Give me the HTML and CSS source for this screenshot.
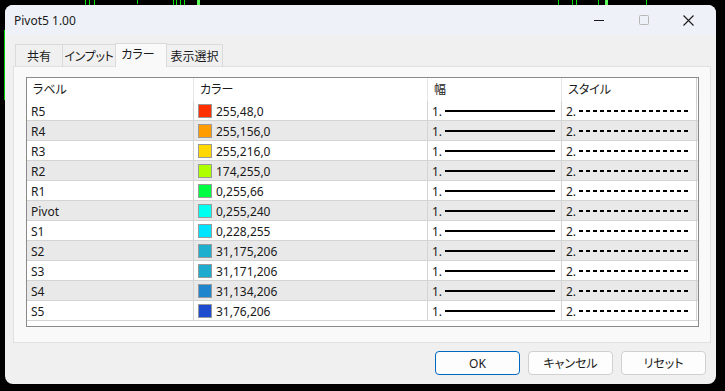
FILE: index.html
```html
<!DOCTYPE html>
<html lang="ja">
<head>
    <meta charset="UTF-8">
    <title>Pivot5 1.00</title>
    <link rel="stylesheet" href="styles.css">
</head>
<body>
    <div class="chart">
        <span class="tick" style="left:85px"></span>
        <span class="tick" style="left:89px"></span>
        <span class="tick" style="left:94px"></span>
        <span class="tick short" style="left:137px"></span>
        <span class="tick" style="left:173px"></span>
        <span class="tick" style="left:176px"></span>
        <span class="tick" style="left:180px"></span>
        <span class="tick" style="left:184px"></span>
        <span class="tick wide" style="left:197px"></span>
        <span class="tick" style="left:558px"></span>
        <span class="tick" style="left:572px"></span>
        <span class="tick" style="left:576px"></span>
        <span class="tick" style="left:598px"></span>
        <span class="tick wide" style="left:605px"></span>
        <span class="tick" style="left:646px"></span>
        <span class="side"></span>
    </div>

    <div class="window">
        <div class="titlebar">
            <span class="title">Pivot5 1.00</span>
            <div class="controls">
                <button class="ctl">
                    <svg width="10" height="10" viewBox="0 0 10 10"><line x1="0" y1="5.5" x2="10" y2="5.5" stroke="#1a1a1a" stroke-width="1"/></svg>
                </button>
                <button class="ctl">
                    <svg width="10" height="10" viewBox="0 0 10 10"><rect x="0.5" y="0.5" width="9" height="9" rx="1" fill="none" stroke="#b8b8b8" stroke-width="1"/></svg>
                </button>
                <button class="ctl">
                    <svg width="11" height="11" viewBox="0 0 11 11"><path d="M0.5 0.5 L10.5 10.5 M10.5 0.5 L0.5 10.5" stroke="#1a1a1a" stroke-width="1.1"/></svg>
                </button>
            </div>
        </div>

        <div class="content">
            <div class="tabs">
                <div class="tab t-common">共有</div>
                <div class="tab t-input">インプット</div>
                <div class="tab t-color active">カラー</div>
                <div class="tab t-view">表示選択</div>
            </div>

            <div class="panel">
                <div class="list">
                    <div class="row head">
                        <div class="cell">ラベル</div>
                        <div class="cell">カラー</div>
                        <div class="cell">幅</div>
                        <div class="cell">スタイル</div>
                    </div>
                    <div class="row">
                        <div class="cell">R5</div>
                        <div class="cell"><span class="swatch" style="background:#ff3000"></span>255,48,0</div>
                        <div class="cell"><span class="num">1.</span><span class="solid"></span></div>
                        <div class="cell"><span class="num">2.</span><span class="dash"></span></div>
                    </div>
                    <div class="row">
                        <div class="cell">R4</div>
                        <div class="cell"><span class="swatch" style="background:#ff9c00"></span>255,156,0</div>
                        <div class="cell"><span class="num">1.</span><span class="solid"></span></div>
                        <div class="cell"><span class="num">2.</span><span class="dash"></span></div>
                    </div>
                    <div class="row">
                        <div class="cell">R3</div>
                        <div class="cell"><span class="swatch" style="background:#ffd800"></span>255,216,0</div>
                        <div class="cell"><span class="num">1.</span><span class="solid"></span></div>
                        <div class="cell"><span class="num">2.</span><span class="dash"></span></div>
                    </div>
                    <div class="row">
                        <div class="cell">R2</div>
                        <div class="cell"><span class="swatch" style="background:#aeff00"></span>174,255,0</div>
                        <div class="cell"><span class="num">1.</span><span class="solid"></span></div>
                        <div class="cell"><span class="num">2.</span><span class="dash"></span></div>
                    </div>
                    <div class="row">
                        <div class="cell">R1</div>
                        <div class="cell"><span class="swatch" style="background:#00ff42"></span>0,255,66</div>
                        <div class="cell"><span class="num">1.</span><span class="solid"></span></div>
                        <div class="cell"><span class="num">2.</span><span class="dash"></span></div>
                    </div>
                    <div class="row">
                        <div class="cell">Pivot</div>
                        <div class="cell"><span class="swatch" style="background:#00fff0"></span>0,255,240</div>
                        <div class="cell"><span class="num">1.</span><span class="solid"></span></div>
                        <div class="cell"><span class="num">2.</span><span class="dash"></span></div>
                    </div>
                    <div class="row">
                        <div class="cell">S1</div>
                        <div class="cell"><span class="swatch" style="background:#00e4ff"></span>0,228,255</div>
                        <div class="cell"><span class="num">1.</span><span class="solid"></span></div>
                        <div class="cell"><span class="num">2.</span><span class="dash"></span></div>
                    </div>
                    <div class="row">
                        <div class="cell">S2</div>
                        <div class="cell"><span class="swatch" style="background:#1fafce"></span>31,175,206</div>
                        <div class="cell"><span class="num">1.</span><span class="solid"></span></div>
                        <div class="cell"><span class="num">2.</span><span class="dash"></span></div>
                    </div>
                    <div class="row">
                        <div class="cell">S3</div>
                        <div class="cell"><span class="swatch" style="background:#1fabce"></span>31,171,206</div>
                        <div class="cell"><span class="num">1.</span><span class="solid"></span></div>
                        <div class="cell"><span class="num">2.</span><span class="dash"></span></div>
                    </div>
                    <div class="row">
                        <div class="cell">S4</div>
                        <div class="cell"><span class="swatch" style="background:#1f86ce"></span>31,134,206</div>
                        <div class="cell"><span class="num">1.</span><span class="solid"></span></div>
                        <div class="cell"><span class="num">2.</span><span class="dash"></span></div>
                    </div>
                    <div class="row">
                        <div class="cell">S5</div>
                        <div class="cell"><span class="swatch" style="background:#1f4cce"></span>31,76,206</div>
                        <div class="cell"><span class="num">1.</span><span class="solid"></span></div>
                        <div class="cell"><span class="num">2.</span><span class="dash"></span></div>
                    </div>
                </div>
            </div>

            <div class="buttons">
                <button class="btn primary">OK</button>
                <button class="btn">キャンセル</button>
                <button class="btn">リセット</button>
            </div>
        </div>
    </div>
</body>
</html>
```

FILE: styles.css
```css
* {
    margin: 0;
    padding: 0;
    box-sizing: border-box;
    font-family: 'Noto Sans', 'Noto Sans CJK JP', sans-serif;
    font-feature-settings: "palt";
}

body {
    background-color: #000;
    width: 725px;
    height: 391px;
    overflow: hidden;
    padding: 5px 9px 7px 5px;
    position: relative;
}

/* chart lines behind the dialog */
.chart {
    position: absolute;
    inset: 0;
}

.tick {
    position: absolute;
    top: 0;
    width: 1px;
    height: 6px;
    background-color: #00e000;
}

.tick.short {
    height: 4px;
}

.tick.wide {
    width: 3px;
    background-color: #5cff5c;
}

.side {
    position: absolute;
    left: 4px;
    top: 30px;
    width: 1px;
    height: 70px;
    background-color: #00d000;
}

.window {
    position: relative;
    width: 711px;
    height: 379px;
    background-color: #f0f0f0;
    border-radius: 8px;
    overflow: hidden;
    display: flex;
    flex-direction: column;
    color: #1a1a1a;
    font-size: 12px;
}

.titlebar {
    height: 30px;
    background-color: #eef2f8;
    display: flex;
    align-items: center;
    justify-content: space-between;
    padding-left: 9px;
}

.title {
    font-size: 12px;
    color: #1a1a1a;
}

.controls {
    display: flex;
    height: 100%;
    padding-right: 5px;
}

.ctl {
    width: 45px;
    height: 100%;
    border: none;
    background: transparent;
    display: flex;
    align-items: center;
    justify-content: center;
}

.content {
    flex: 1;
    display: flex;
    flex-direction: column;
    padding: 8px 0 0 8px;
}

.tabs {
    display: flex;
    padding-left: 2px;
    height: 23px;
    align-items: flex-end;
}

.tab {
    height: 22px;
    border: 1px solid #dadada;
    border-bottom: none;
    margin-right: -1px;
    background-color: #f0f0f0;
    display: flex;
    align-items: center;
    justify-content: center;
    font-size: 12px;
    padding-top: 1px;
}

.t-common { width: 48px; }
.t-input { width: 54px; letter-spacing: -0.3px; }
.t-color { width: 52px; }
.t-view { width: 57px; }

.tab.active {
    height: 24px;
    margin-bottom: -1px;
    background-color: #f9f9f9;
    position: relative;
    z-index: 1;
    padding: 0 6px 3px 0;
}

.panel {
    width: 698px;
    height: 277px;
    background-color: #f9f9f9;
    border: 1px solid #e0e0e0;
    padding: 10px 11px 0 12px;
}

.list {
    width: 673px;
    height: 250px;
    background-color: #fff;
    border: 1px solid #8a8a8a;
}

.row {
    display: grid;
    grid-template-columns: 167px 234px 134px 135px;
    height: 20px;
    border-bottom: 1px solid #d4d4d4;
}

.row:nth-child(odd) {
    background-color: #e9e9e9;
}

.row.head {
    height: 23px;
    background-color: #fff;
    border-bottom: none;
}

.cell {
    display: flex;
    align-items: center;
    padding: 1px 0 0 4px;
    border-right: 1px solid #d4d4d4;
    white-space: nowrap;
    font-size: 12px;
}

.row.head .cell {
    padding: 0 0 2px 6px;
    border-right-color: #e6e6e6;
}

.row.head .cell:last-child {
    border-right: 1px solid #d0d0d0;
}

.swatch {
    width: 14px;
    height: 14px;
    border: 1px solid #9a9a9a;
    margin-right: 4px;
    flex-shrink: 0;
}

.num {
    width: 13px;
}

.solid {
    width: 110px;
    height: 2px;
    background-color: #000;
}

.dash {
    width: 111px;
    height: 1.5px;
    background: repeating-linear-gradient(to right, #000 0 4px, transparent 4px 7px);
}

.buttons {
    display: flex;
    justify-content: flex-end;
    gap: 8px;
    padding: 8px 10px 0 0;
}

.btn {
    width: 85px;
    height: 24px;
    border: 1px solid #d0d0d0;
    border-radius: 4px;
    background-color: #fdfdfd;
    font-size: 12px;
    color: #1a1a1a;
}

.btn.primary {
    border-color: #0067c0;
}
```
